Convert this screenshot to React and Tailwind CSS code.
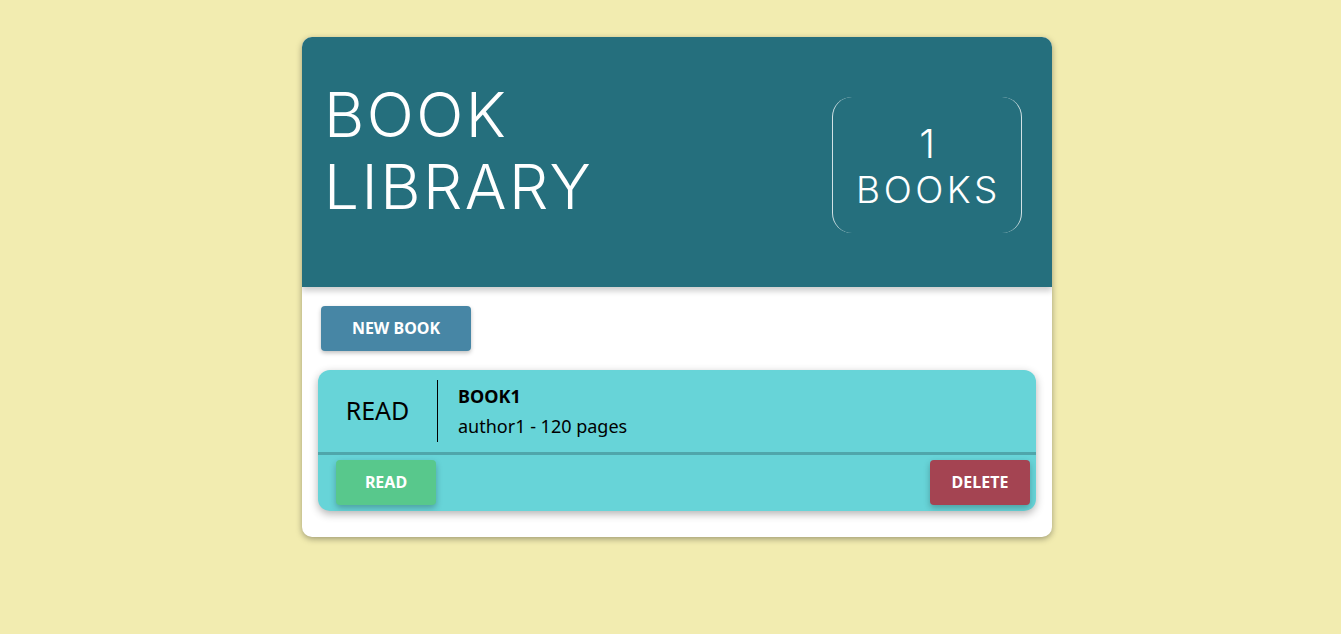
export default function App() {
  return (
    <div className="min-h-[634px] w-full bg-[#F2ECB0] pt-[37px] flex justify-center pl-[13px]" style={{ fontFamily: '"Noto Sans", sans-serif' }}>
      <div className="w-[750px] h-[500px] rounded-[10px] bg-white shadow-[0_2px_6px_rgba(0,0,0,0.35)] overflow-hidden flex flex-col">
        <header className="relative z-10 h-[250px] shrink-0 bg-[#256F7D] shadow-[0_4px_6px_rgba(0,0,0,0.2)] flex items-center justify-between pl-[22px] pr-[30px]">
          <h1 className="text-white font-light text-[62px] leading-[72px] tracking-[2.5px] mb-[22px]" style={{ fontFamily: 'Inter, sans-serif' }}>
            BOOK<br />LIBRARY
          </h1>
          <div className="w-[190px] h-[136px] rounded-[20px] border-x border-white/80 flex flex-col items-center justify-center text-white font-light mt-[6px]" style={{ fontFamily: 'Inter, sans-serif' }}>
            <span className="text-[40px] leading-[46px]">1</span>
            <span className="text-[37px] leading-[46px] tracking-[3.5px] pl-[3px] mb-[-4px]">BOOKS</span>
          </div>
        </header>
        <div className="px-4 pt-[19px]">
          <button className="ml-[3px] w-[150px] h-[45px] rounded-[4px] bg-[#4786A5] text-white font-bold text-[16px] leading-[20px] pb-[2px] shadow-[0_2px_4px_rgba(0,0,0,0.25)]">
            NEW BOOK
          </button>
          <div className="mt-[19px] rounded-[12px] bg-[#67D4D8] shadow-[0_3px_8px_rgba(0,0,0,0.3)] overflow-hidden">
            <div className="flex items-stretch h-[85px] pt-[10px] pb-[10px] border-b-[3px] border-[#4FA6AB]">
              <div className="w-[119px] flex items-center justify-center text-[25px] text-black">READ</div>
              <div className="w-px bg-black"></div>
              <div className="pl-[20px] flex flex-col justify-center text-black">
                <div className="font-bold text-[18px] leading-[30px] mt-[-1px]">BOOK1</div>
                <div className="text-[18px] leading-[30px]">author1 - 120 pages</div>
              </div>
            </div>
            <div className="flex justify-between pl-[18px] pr-[6px] pt-[5px] pb-[6px]">
              <button className="w-[100px] h-[45px] rounded-[4px] bg-[#58C88C] text-white font-bold text-[16px] leading-[20px] pb-[2px] shadow-[0_3px_6px_rgba(0,0,0,0.25)]">READ</button>
              <button className="w-[100px] h-[45px] rounded-[4px] bg-[#A44452] text-white font-bold text-[16px] leading-[20px] pb-[2px] shadow-[0_3px_6px_rgba(0,0,0,0.25)]">DELETE</button>
            </div>
          </div>
        </div>
      </div>
    </div>
  );
}
